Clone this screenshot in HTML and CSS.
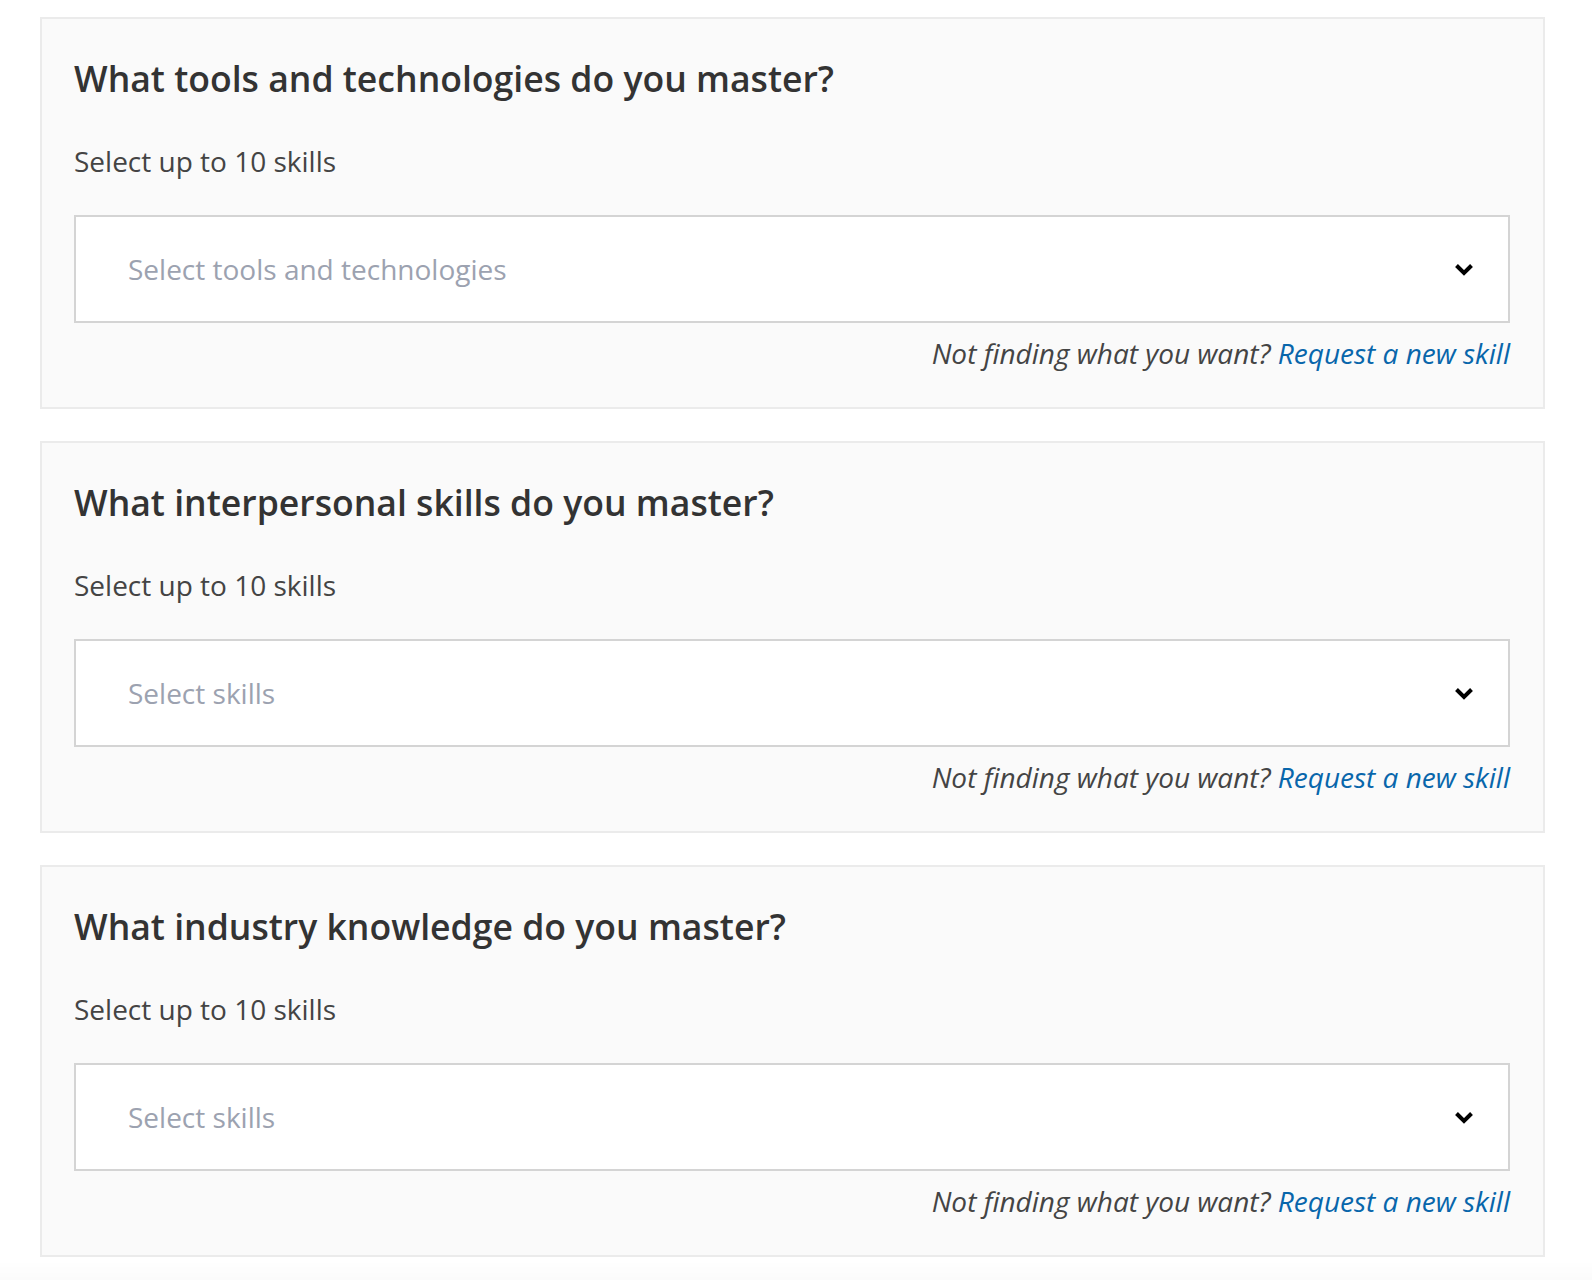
FILE: index.html
```html
<!DOCTYPE html>
<html lang="en">
<head>
    <meta charset="UTF-8">
    <meta name="viewport" content="width=device-width, initial-scale=1.0">
    <title>Skills</title>
    <link rel="stylesheet" href="styles.css">
</head>
<body>

    <div class="skills-form">

        <!-- tools -->
        <section class="skill-card">
            <h2>What tools and technologies do you master?</h2>
            <p class="hint">Select up to 10 skills</p>
            <div class="skill-select">
                <span class="placeholder">Select tools and technologies</span>
                <svg class="chevron" width="20" height="13" viewBox="0 0 20 13"><path d="M2.5 2.5 L10 10 L17.5 2.5" fill="none" stroke="#000" stroke-width="4" stroke-linecap="butt"/></svg>
            </div>
            <p class="request">Not finding what you want? <a href="#">Request a new skill</a></p>
        </section>

        <!-- interpersonal -->
        <section class="skill-card">
            <h2>What interpersonal skills do you master?</h2>
            <p class="hint">Select up to 10 skills</p>
            <div class="skill-select">
                <span class="placeholder">Select skills</span>
                <svg class="chevron" width="20" height="13" viewBox="0 0 20 13"><path d="M2.5 2.5 L10 10 L17.5 2.5" fill="none" stroke="#000" stroke-width="4" stroke-linecap="butt"/></svg>
            </div>
            <p class="request">Not finding what you want? <a href="#">Request a new skill</a></p>
        </section>

        <!-- industry -->
        <section class="skill-card">
            <h2>What industry knowledge do you master?</h2>
            <p class="hint">Select up to 10 skills</p>
            <div class="skill-select">
                <span class="placeholder">Select skills</span>
                <svg class="chevron" width="20" height="13" viewBox="0 0 20 13"><path d="M2.5 2.5 L10 10 L17.5 2.5" fill="none" stroke="#000" stroke-width="4" stroke-linecap="butt"/></svg>
            </div>
            <p class="request">Not finding what you want? <a href="#">Request a new skill</a></p>
        </section>

    </div>

    <div class="bottom-shade"></div>

</body>
</html>
```

FILE: styles.css
```css
body {
    font-family: "Open Sans", "Noto Sans", sans-serif;
    margin: 0;
    padding: 0;
    background-color: #fff;
    color: #333;
}

.skills-form {
    width: 1505px;
    margin: 17px 0 0 40px;
    display: flex;
    flex-direction: column;
    gap: 32px;
}

.skill-card {
    background-color: #fafafa;
    border: 2px solid #ebebeb;
    padding: 37px 33px 34px 32px;
}

.skill-card h2 {
    margin: 0 0 41px;
    font-size: 35.6px;
    font-weight: 600;
    line-height: 44px;
    color: #333;
}

.hint {
    margin: 0 0 34px;
    font-size: 28px;
    line-height: 40px;
    color: #444;
}

.skill-select {
    height: 104px;
    border: 2px solid #d4d4d4;
    background-color: #fff;
    display: flex;
    align-items: center;
    justify-content: space-between;
    padding: 0 34px 0 52px;
}

.placeholder {
    font-size: 28px;
    color: #9ca2b0;
}

.chevron {
    display: block;
}

.request {
    margin: 10px 0 0;
    font-size: 28px;
    line-height: 40px;
    font-style: italic;
    text-align: right;
    color: #444;
}

.request a {
    color: #0866ab;
    text-decoration: none;
}

.bottom-shade {
    position: fixed;
    left: 0;
    right: 0;
    bottom: 0;
    height: 20px;
    background: linear-gradient(to bottom, rgba(0, 0, 0, 0), rgba(0, 0, 0, 0.015));
}
```
